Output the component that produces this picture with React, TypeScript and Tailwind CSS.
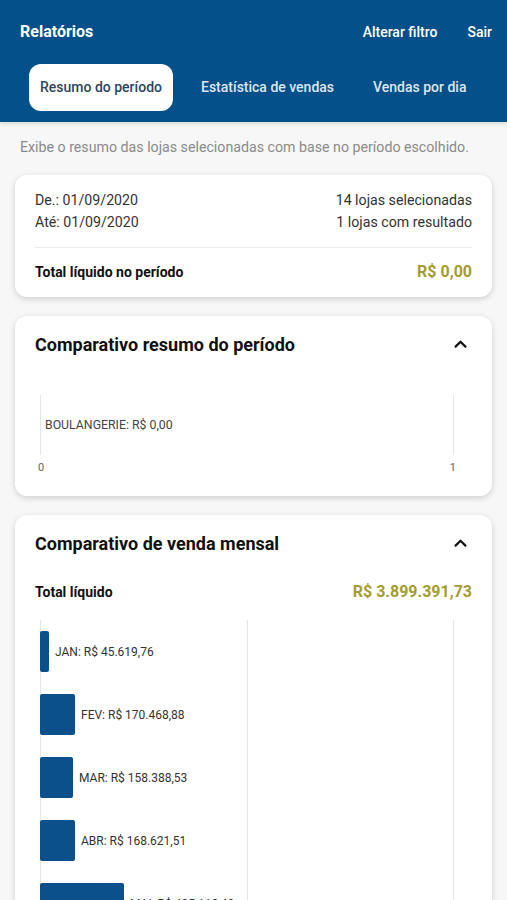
import React from 'react';

const MONTHS = [
  { label: 'JAN', value: 45619.76 },
  { label: 'FEV', value: 170468.88 },
  { label: 'MAR', value: 158388.53 },
  { label: 'ABR', value: 168621.51 },
  { label: 'MAI', value: 405112.4 },
];

const CHART_MAX = 2000000;
const CHART_WIDTH = 414;

const formatBRL = (n: number) =>
  'R$ ' +
  n
    .toFixed(2)
    .replace('.', ',')
    .replace(/\B(?=(\d{3})+(?!\d))/g, '.');

const ChevronUp = () => (
  <svg width="17" height="17" viewBox="0 0 24 24" fill="none" stroke="#111" strokeWidth="3" strokeLinecap="round" strokeLinejoin="round">
    <path d="M5 15l7-7 7 7" />
  </svg>
);

const Card: React.FC<{ children: React.ReactNode; className?: string }> = ({ children, className }) => (
  <div className={`bg-white rounded-[12px] shadow-[0_2px_6px_rgba(0,0,0,0.16)] ${className || ''}`}>{children}</div>
);

const CardTitle: React.FC<{ title: string }> = ({ title }) => (
  <div className="flex justify-between items-center h-[22px]">
    <h2 className="text-[18px] font-bold text-[#111]">{title}</h2>
    <div className="mr-[3px]">
      <ChevronUp />
    </div>
  </div>
);

const App: React.FC = () => {
  const tabs = ['Resumo do período', 'Estatística de vendas', 'Vendas por dia'];

  return (
    <div className="min-h-[900px] bg-[#f7f7f7] font-['Roboto',sans-serif]">
      {/* Header */}
      <div className="bg-[#03508a] shadow-[0_2px_4px_rgba(0,0,0,0.12)] pb-[11px]">
        <div className="h-[64px] flex items-center justify-between pl-[20px] pr-[15px]">
          <span className="text-white text-[16px] font-bold">Relatórios</span>
          <div className="flex items-center gap-[30px]">
            <span className="text-white text-[14px] font-medium">Alterar filtro</span>
            <span className="text-white text-[14px] font-medium">Sair</span>
          </div>
        </div>
        <div className="flex items-center gap-[17px] pl-[29px]">
          {tabs.map((t, i) => (
            <div
              key={t}
              className={
                i === 0
                  ? 'h-[47px] px-[11px] flex items-center rounded-[12px] bg-white text-[#2b4760] text-[14px] font-medium'
                  : 'h-[47px] px-[11px] flex items-center text-[#dce6f0] text-[14px] font-medium'
              }
            >
              {t}
            </div>
          ))}
        </div>
      </div>

      <p className="px-[20px] pt-[16px] text-[14.2px] leading-[18px] text-[#8a8a8a]">
        Exibe o resumo das lojas selecionadas com base no período escolhido.
      </p>

      <div className="px-[15px] pt-[19px] pb-[20px] flex flex-col gap-[19px]">
        {/* Summary card */}
        <Card className="px-[20px] pt-[15px] pb-[15px]">
          <div className="flex flex-col gap-[2px] text-[14.2px] leading-[20px] text-[#333]">
            <div className="flex justify-between">
              <span>De.: 01/09/2020</span>
              <span>14 lojas selecionadas</span>
            </div>
            <div className="flex justify-between">
              <span>Até: 01/09/2020</span>
              <span>1 lojas com resultado</span>
            </div>
          </div>
          <div className="mt-[15px] border-t border-[#ececec]" />
          <div className="flex justify-between items-center h-[20px] mt-[14px]">
            <span className="text-[14px] font-bold text-[#111]">Total líquido no período</span>
            <span className="text-[16px] font-bold text-[#a49d32]">R$ 0,00</span>
          </div>
        </Card>

        {/* Comparativo resumo */}
        <Card className="px-[20px] pt-[17px] pb-[21px]">
          <CardTitle title="Comparativo resumo do período" />
          <div className="mt-[40px] ml-[5px] w-[414px]">
            <div className="relative h-[60px] flex items-center">
              <div className="absolute left-0 top-0 bottom-0 w-px bg-[#e6e6e6]" />
              <div className="absolute right-0 top-0 bottom-0 w-px bg-[#e6e6e6]" />
              <span className="pl-[5px] text-[12.3px] text-[#444]">BOULANGERIE: R$ 0,00</span>
            </div>
            <div className="flex justify-between h-[14px] mt-[6px] items-center text-[11px] text-[#666] -mx-[2px]">
              <span>0</span>
              <span>1</span>
            </div>
          </div>
        </Card>

        {/* Comparativo mensal */}
        <Card className="px-[20px] pt-[17px] pb-[20px]">
          <CardTitle title="Comparativo de venda mensal" />
          <div className="flex justify-between items-center h-[20px] mt-[28px]">
            <span className="text-[14px] font-bold text-[#111]">Total líquido</span>
            <span className="text-[16px] font-bold text-[#a49d32]">R$ 3.899.391,73</span>
          </div>
          <div className="relative mt-[18px] ml-[5px] w-[414px] pt-[11px] flex flex-col gap-[22px]">
            <div className="absolute left-0 top-0 bottom-0 w-px bg-[#e6e6e6]" />
            <div className="absolute left-[207px] top-0 bottom-0 w-px bg-[#e6e6e6]" />
            <div className="absolute right-0 top-0 bottom-0 w-px bg-[#e6e6e6]" />
            {MONTHS.map((m) => (
              <div key={m.label} className="relative flex items-center h-[41px]">
                <div
                  className="h-[41px] bg-[#0b4f8b] rounded-[2px]"
                  style={{ width: Math.round((m.value / CHART_MAX) * CHART_WIDTH) }}
                />
                <span className="pl-[6px] text-[12px] text-[#333]">
                  {m.label}: {formatBRL(m.value)}
                </span>
              </div>
            ))}
          </div>
        </Card>
      </div>
    </div>
  );
};

export default App;
